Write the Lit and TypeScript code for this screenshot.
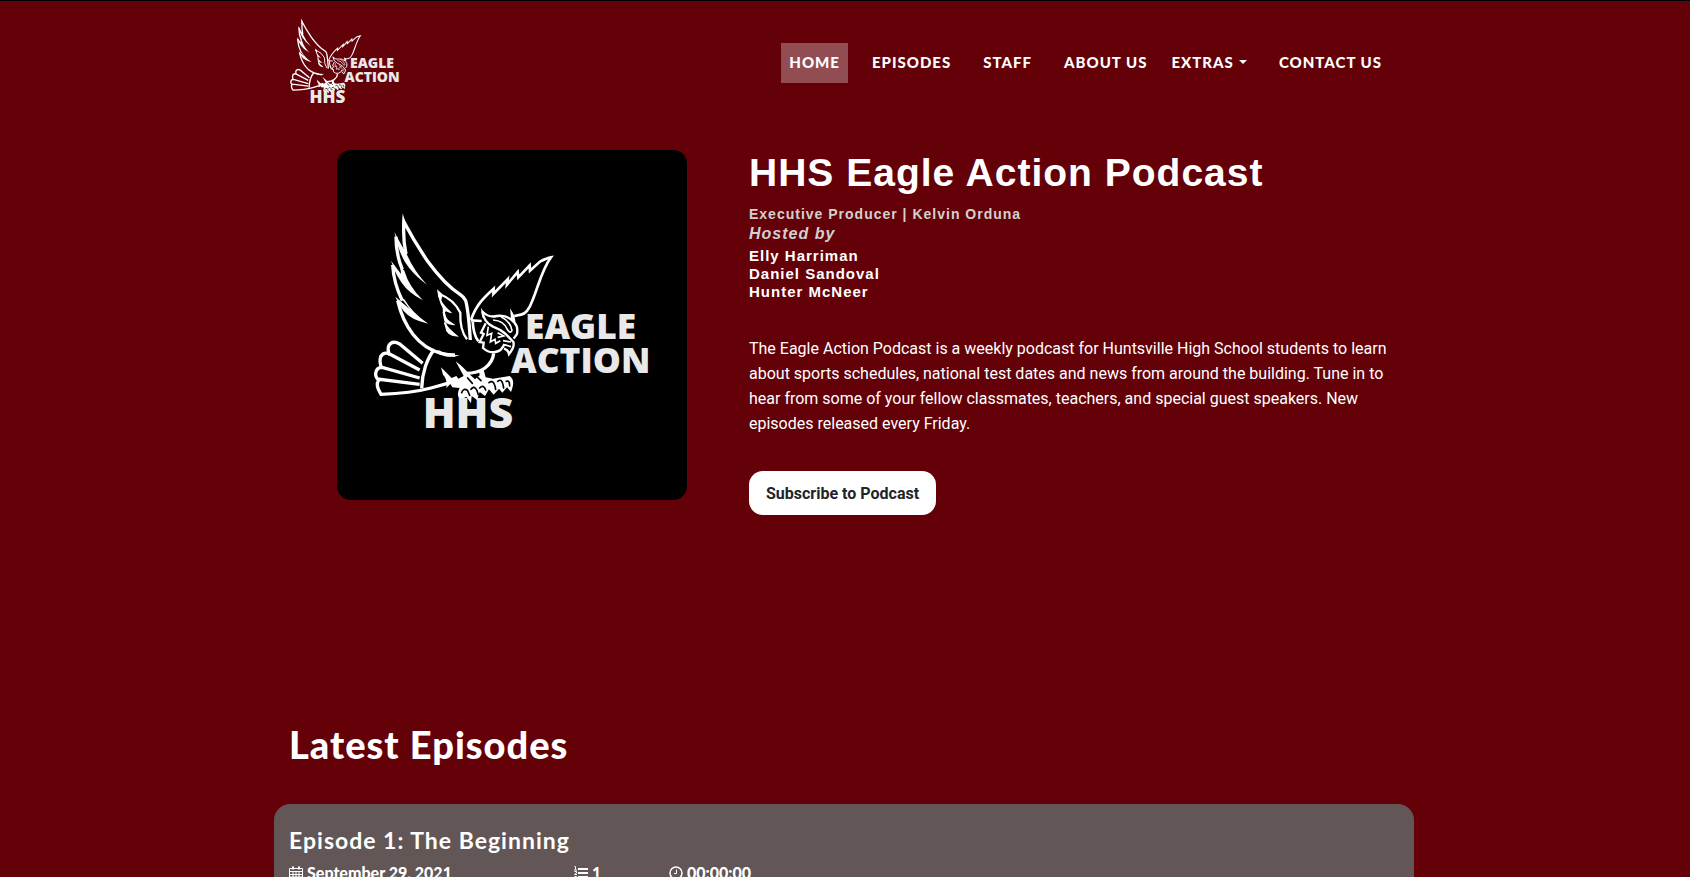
import { LitElement, html, css, svg } from "lit";
import { customElement } from "lit/decorators.js";

const eagle = svg`
  <g fill="none" stroke="#fff" stroke-width="10" stroke-linejoin="miter" stroke-miterlimit="5" stroke-linecap="butt">
    <path d="M418 600 Q412 510 404 482 Q400 472 388 464 C350 440 320 405 290 364 Q250 305 219 246 Q215 295 225 342" />
    <path d="M195 290 Q195 345 214 388" />
    <path d="M185 375 Q188 430 214 482" />
    <path d="M200 482 C218 560 262 622 330 640 Q352 645 372 645" />
    <path stroke-width="8" d="M420 540 C436 492 462 470 488 446 L487 462 L530 418 L528 434 L560 396 L562 412 L596 376 L597 392 L628 364 Q648 354 660 352 C632 390 622 440 604 482 Q590 520 570 524 L550 528" />
    <path stroke-width="8" d="M420 541 L452 543 M425 540 Q426 582 442 604" />
    <path stroke-width="7" d="M325 462 Q368 478 388 518 Q386 570 408 598" />
    <path stroke-width="6" d="M324 460 Q328 492 345 514 M338 505 Q338 535 356 550 M342 548 Q350 572 366 586" />
    <path d="M310 628 C288 655 273 700 272 745" />
    <path stroke-width="10" d="M275 670 L206 612 Q184 600 174 616 Q168 628 176 646 M266 690 L176 642 Q158 634 149 650 Q144 665 152 684 M266 714 L154 682 Q136 682 134 700 Q133 714 146 722 M266 733 L146 718 Q134 728 142 748 L150 763 Q240 760 300 744 L350 730" />
    <path d="M488 640 Q486 665 462 684 Q440 700 404 700" />
    <path stroke-width="7" d="M455 516 Q474 534 498 528 Q526 524 544 542 L542 520 Q551 535 550 548 Q562 560 558 582 L548 596" />
    <path stroke-width="7" d="M454 514 Q458 546 486 560 Q508 568 524 582 L547 606 Q552 620 534 642 Q532 630 519 626" />
    <path stroke-width="7" d="M464 550 L450 578 L458 582 L446 606 L458 608 L456 624 Q474 640 492 636 Q512 634 520 612" />
    <path stroke-width="5" d="M472 560 L468 586 L482 580 L478 606 L492 598 L494 610 L508 602 M500 578 L518 588 L500 592 M486 540 Q520 542 530 570 Q540 584 544 568 M510 530 Q540 546 542 570 M516 602 L540 606 M520 614 L540 620" />
  </g>
  <g fill="#fff">
    <path d="M215 220 L226 256 L213 262Z M190 276 L213 318 L226 340 Q248 392 288 434 Q244 402 222 366 Q208 342 200 316Z" />
    <path d="M180 362 L210 402 L208 380 L220 392 Q234 440 276 481 Q232 458 212 428 Q198 408 190 390Z" />
    <path d="M193 470 L236 507 L210 474 L220 478 Q244 520 292 551 Q240 540 218 513 L202 490Z" />
    <path d="M318 448 L334 462 L332 478 L322 472Z M328 480 Q344 502 364 520 Q346 518 336 504Z M334 514 L346 536 L374 556 Q350 556 340 544Z M338 544 Q354 568 384 590 Q356 590 346 574Z" />
    <path d="M322 630 Q352 646 386 646 Q350 658 320 638Z M450 504 L462 520 L454 534Z M540 512 L552 530 L541 536Z" />
    <path d="M330 682 Q348 700 362 714 L376 708 L382 716 L398 708 L374 664 Q400 684 412 700 L432 718 L446 706 L444 694 L458 690 L464 712 L486 716 L536 708 Q552 720 544 744 L540 756 L528 742 L514 758 L504 746 L488 764 L474 748 L462 768 L446 756 L438 780 L422 768 L420 790 L406 770 L388 780 Q374 766 386 744 L364 742 L358 732 L346 744 Q350 718 336 704Z" />
  </g>
  <g fill="none" stroke="#000" stroke-width="5" stroke-linecap="round">
    <path d="M392 758 Q398 742 410 752 L416 766 M420 748 Q430 734 438 752 L442 764 M446 744 Q458 732 464 750 M474 728 Q486 718 492 738 L494 748 M500 724 Q512 714 516 734 L518 744 M526 724 Q536 720 536 738 M410 714 L424 730 M440 712 L450 722" />
  </g>
  <g fill="#e9e9e9" font-family="'Open Sans', sans-serif" font-weight="800">
    <text x="582" y="598" font-size="106">EAGLE</text>
    <text x="540" y="700" font-size="106">ACTION</text>
    <text x="275" y="863" font-size="129">HHS</text>
  </g>`;

const calendar = html`<svg class="icon" viewBox="0 0 14 14" aria-hidden="true">
  <path fill="none" stroke="#fff" d="M.5 2.5h13v11H.5zM.5 5.5h13M4 5v8.500M7 5v8.500M10 5v8.500M1 8.500h12M1 11h12" />
  <path fill="none" stroke="#fff" stroke-width="2" d="M4 .500v3M10 .500v3" />
</svg>`;
const list = html`<svg class="icon" viewBox="0 0 14 14" aria-hidden="true">
  <path fill="none" stroke="#fff" stroke-width="2" d="M4 3h10M4 7h10M4 11h10" />
  <path fill="none" stroke="#fff" d="M.5 .500h1v3M0 4h3M.5 5.500h2v1.500l-2 1.500h2.500M.5 10.500h2v3h-2" />
</svg>`;
const clock = html`<svg class="icon" viewBox="0 0 14 14" aria-hidden="true">
  <circle cx="7" cy="7" r="6" fill="none" stroke="#fff" stroke-width="1.500" />
  <path fill="none" stroke="#fff" d="M7.500 3.500v4H5" />
</svg>`;

@customElement("app-root")
export class AppRoot extends LitElement {
  static styles = css`
    :host {
      display: block;
      box-sizing: border-box;
      height: 100vh;
      padding-right: 2px;
      overflow-y: auto;
      scrollbar-width: none;
      border-top: 1px solid #000;
      background: #640008;
      color: #fff;
      font-family: Lato, sans-serif;
      font-size: 16px;
    }
    * { box-sizing: border-box; }
    h1, h2, h3, p, ul { margin: 0; padding: 0; }
    .container { max-width: 1140px; margin: 0 auto; }
    .bar { display: flex; justify-content: space-between; align-items: center; height: 123px; padding: 0 16px; }
    .brand { display: block; padding-bottom: 4px; }
    .brand svg { display: block; width: 110px; height: 86px; overflow: visible; }
    .nav { display: flex; list-style: none; }
    .item { margin: 0 8px; }
    .item.dropdown { margin-left: 0; }
    .link {
      display: flex;
      align-items: center;
      height: 40px;
      padding: 0 8px 2px;
      color: #fff;
      font-size: 15px;
      font-weight: 900;
      letter-spacing: 1px;
      text-decoration: none;
      white-space: nowrap;
    }
    .link.active { background: rgba(255, 255, 255, 0.3); }
    .caret { margin-left: 5px; border: 4px solid transparent; border-top-color: #fff; border-bottom: 0; }
    .hero { display: grid; grid-template-columns: 5fr 7fr; padding-top: 26px; }
    .cover { display: block; width: 350px; max-width: 100%; justify-self: center; align-self: start; border-radius: 14px; background: #000; }
    .about { padding-right: 15px; font-family: "Liberation Sans", sans-serif; font-weight: 700; letter-spacing: 1px; }
    .title { font-size: 39px; line-height: 46px; }
    .producer { margin-top: 9px; font-size: 14px; line-height: 18px; color: #d4d0d0; }
    .hosted { font-size: 16px; line-height: 22px; font-style: italic; color: #d4d0d0; }
    .hosts { margin-top: 2px; list-style: none; font-size: 15px; line-height: 18px; }
    .text { margin-top: 35px; font-family: Roboto, sans-serif; font-weight: 400; font-size: 16px; line-height: 25px; letter-spacing: 0; }
    .subscribe {
      display: block;
      height: 44px;
      margin-top: 35px;
      padding: 0 17px;
      border: 0;
      border-radius: 14px;
      background: #fff;
      color: #212529;
      font: 700 16px Roboto, sans-serif;
    }
    .latest { padding-top: 201px; }
    .heading { padding: 0 15px; font-size: 38px; font-weight: 900; line-height: 56px; letter-spacing: 1px; }
    .card { margin-top: 32px; padding: 20px 15px 32px; border-radius: 16px; background: #635656; }
    .episode { font-size: 23px; font-weight: 700; line-height: 32px; letter-spacing: 1px; }
    .meta { display: grid; grid-template-columns: 285px 95px 1fr; margin-top: 7px; font-weight: 900; line-height: 20px; }
    .fact { display: flex; align-items: center; gap: 4px; }
    .icon { width: 14px; height: 14px; }
  `;

  private links = ["Home", "Episodes", "Staff", "About Us", "Extras", "Contact Us"];

  render() {
    return html`
      <header class="container bar">
        <a class="brand" href="#" aria-label="Eagle Action home">
          <svg viewBox="128 218 832 650">${eagle}</svg>
        </a>
        <nav>
          <ul class="nav">
            ${this.links.map((label) => html`
              <li class="item ${label === "Extras" ? "dropdown" : ""}">
                <a class="link ${label === "Home" ? "active" : ""}" href="#">
                  ${label.toUpperCase()}${label === "Extras" ? html`<span class="caret"></span>` : ""}
                </a>
              </li>`)}
          </ul>
        </nav>
      </header>
      <main>
        <section class="container hero">
          <svg class="cover" viewBox="18 30 1050 1050" role="img" aria-label="Podcast cover">${eagle}</svg>
          <div class="about">
            <h1 class="title">HHS Eagle Action Podcast</h1>
            <p class="producer">Executive Producer | Kelvin Orduna</p>
            <p class="hosted">Hosted by</p>
            <ul class="hosts">
              <li>Elly Harriman</li>
              <li>Daniel Sandoval</li>
              <li>Hunter McNeer</li>
            </ul>
            <p class="text">
              The Eagle Action Podcast is a weekly podcast for Huntsville High School students to learn
              about sports schedules, national test dates and news from around the building. Tune in to
              hear from some of your fellow classmates, teachers, and special guest speakers. New
              episodes released every Friday.
            </p>
            <button class="subscribe" type="button">Subscribe to Podcast</button>
          </div>
        </section>
        <section class="container latest">
          <h2 class="heading">Latest Episodes</h2>
          <article class="card">
            <h3 class="episode">Episode 1: The Beginning</h3>
            <div class="meta">
              <span class="fact">${calendar}September 29, 2021</span>
              <span class="fact">${list}1</span>
              <span class="fact">${clock}00:00:00</span>
            </div>
          </article>
        </section>
      </main>
    `;
  }
}
